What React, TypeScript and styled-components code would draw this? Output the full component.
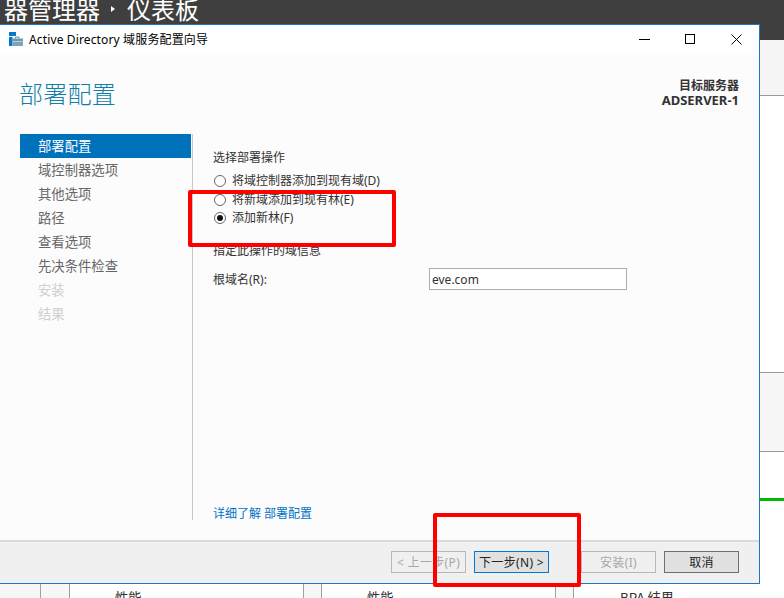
import React from "react";
import styled, { createGlobalStyle } from "styled-components";

const Global = createGlobalStyle`
  html, body { margin: 0; padding: 0; background: #fff; }
  body { font-family: "Noto Sans", "Noto Sans CJK SC", sans-serif; }
  * { box-sizing: border-box; }
`;

const Desktop = styled.div`
  position: relative;
  width: 784px;
  height: 598px;
  overflow: hidden;
`;

/* Server Manager behind the dialog */
const Backdrop = styled.div`
  display: flex;
  flex-direction: column;
  height: 100%;
`;
const TopBar = styled.div`
  height: 40px;
  background: #3f3f3f;
  color: #fff;
  display: flex;
  align-items: flex-start;
  font-size: 24px;
  line-height: 24px;
  font-family: "Noto Sans CJK SC", sans-serif;
  white-space: nowrap;
`;
const Crumbs = styled.div`
  display: flex;
  align-items: center;
  margin-left: 4px;
  margin-top: -3px;
  height: 24px;
`;
const CrumbArrow = styled.span`
  width: 0;
  height: 0;
  margin: 0 12px 0 11px;
  border-left: 4px solid #fff;
  border-top: 3.5px solid transparent;
  border-bottom: 3.5px solid transparent;
`;
const Band = styled.div<{ $h: number; $bg: string }>`
  height: ${(p) => p.$h}px;
  flex: none;
  background: ${(p) => p.$bg};
`;
const BottomRow = styled.div`
  flex: none;
  height: 14px;
  display: grid;
  grid-template-columns: 41px 29px 234px 18px 234px 18px 1fr;
  background: #fff;
  font-family: "Noto Sans CJK SC", sans-serif;
  font-size: 13.33px;
  color: #333;
  overflow: hidden;
`;
const ColCell = styled.div<{ $shade?: boolean; $textLeft?: number }>`
  background: ${(p) => (p.$shade ? "#f7f7f7" : "#fff")};
  border-right: 1px solid #a0a0a0;
  padding-left: ${(p) => p.$textLeft ?? 0}px;
  padding-top: 4px;
  line-height: 20px;
  white-space: nowrap;
`;
const LastCell = styled(ColCell)`
  border-right: none;
`;

/* Dialog */
const Window = styled.div`
  position: absolute;
  left: 0;
  top: 24px;
  width: 760px;
  height: 560px;
  display: flex;
  flex-direction: column;
  background: #fcfcfc;
  border: 1px solid #1a78c8;
  border-left: none;
`;
const TitleBar = styled.div`
  flex: none;
  height: 30px;
  background: #fff;
  display: flex;
  align-items: center;
  padding: 0 0 2px 9px;
  font-size: 12px;
  color: #000;
`;
const TitleText = styled.span`
  margin-left: 6px;
  flex: 1;
  white-space: nowrap;
  letter-spacing: 0.14px;
`;
const WinButton = styled.span`
  width: 46px;
  display: flex;
  justify-content: center;
  align-items: center;
`;
const Body = styled.div`
  flex: 1;
  display: flex;
  flex-direction: column;
  padding: 0 20px 20px;
  min-height: 0;
`;
const Header = styled.div`
  flex: none;
  height: 79px;
  display: flex;
  justify-content: space-between;
`;
const Heading = styled.h1`
  margin: 20px 0 0 -1px;
  font-size: 24px;
  line-height: 36px;
  font-weight: 300;
  letter-spacing: 0.25px;
  color: #117fa8;
  font-family: "Noto Sans CJK SC", sans-serif;
`;
const Target = styled.div`
  margin-top: 23px;
  text-align: right;
  font-size: 12px;
  line-height: 15px;
  font-weight: 600;
  color: #333;
`;
const TargetName = styled.div`
  font-weight: 700;
  font-size: 13px;
`;
const Main = styled.div`
  flex: 1;
  display: flex;
  min-height: 0;
`;
const Sidebar = styled.nav`
  flex: none;
  width: 173px;
  padding-right: 1px;
  border-right: 1px solid #c8c8c8;
  font-size: 13.33px;
  font-family: "Noto Sans CJK SC", sans-serif;
`;
const NavItem = styled.div<{ $state: "active" | "normal" | "disabled" }>`
  height: 24px;
  line-height: 24px;
  padding-left: 18px;
  background: ${(p) => (p.$state === "active" ? "#0072bc" : "transparent")};
  color: ${(p) =>
    p.$state === "active" ? "#fff" : p.$state === "disabled" ? "#cfcfcf" : "#666"};
`;
const Content = styled.div`
  flex: 1;
  display: flex;
  flex-direction: column;
  padding: 16px 0 0 20px;
  font-size: 12px;
  line-height: 16px;
  color: #333;
`;
const RadioGroup = styled.div`
  display: flex;
  flex-direction: column;
  gap: 2.6px;
  margin-top: 7px;
`;
const RadioRow = styled.label`
  display: flex;
  align-items: center;
  gap: 6px;
  height: 16px;
  padding-left: 1px;
`;
const RadioMark = styled.span<{ $checked?: boolean }>`
  flex: none;
  width: 12px;
  height: 12px;
  border-radius: 50%;
  border: 1px solid #666;
  background: #fff;
  display: flex;
  align-items: center;
  justify-content: center;
  &::after {
    content: "";
    width: 6px;
    height: 6px;
    border-radius: 50%;
    background: ${(p) => (p.$checked ? "#111" : "transparent")};
  }
`;
const SectionLabel = styled.div`
  margin-top: 17px;
`;
const FormRow = styled.div`
  display: flex;
  align-items: flex-start;
  margin-top: 9px;
`;
const FormLabel = styled.span`
  width: 216px;
  line-height: 24px;
`;
const TextBox = styled.div`
  width: 198px;
  height: 22px;
  border: 1px solid #abadb3;
  background: #fff;
  padding-left: 2px;
  line-height: 21px;
  color: #333;
`;
const HelpLink = styled.a`
  margin-top: auto;
  margin-bottom: -2px;
  color: #0072c6;
`;
const Footer = styled.div`
  flex: none;
  height: 43px;
  background: #f0f0f0;
  border-top: 2px solid #d9d9d9;
  display: flex;
  align-items: flex-start;
  justify-content: flex-end;
  padding: 9px 20px 0 0;
  gap: 8px;
  font-size: 12px;
`;
const Btn = styled.div<{ $kind?: "disabled" | "focus" | "normal"; $gapLeft?: number }>`
  width: 75px;
  height: 22px;
  line-height: 21px;
  text-align: center;
  white-space: nowrap;
  letter-spacing: 0.35px;
  margin-left: ${(p) => p.$gapLeft ?? 0}px;
  border: 1px solid
    ${(p) =>
      p.$kind === "disabled" ? "#b8b8b8" : p.$kind === "focus" ? "#0078d7" : "#707070"};
  background: ${(p) => (p.$kind === "disabled" ? "#f0f0f0" : "#e1e1e1")};
  color: ${(p) => (p.$kind === "disabled" ? "#a8a8a8" : "#222")};
`;
const RedBox = styled.div<{ $x: number; $y: number; $w: number; $h: number }>`
  position: absolute;
  left: ${(p) => p.$x}px;
  top: ${(p) => p.$y}px;
  width: ${(p) => p.$w}px;
  height: ${(p) => p.$h}px;
  border: 4px solid #ff0000;
  border-radius: 2px;
`;

const AppIcon = () => (
  <svg width="14" height="14" viewBox="0 0 14 14">
    <rect x="0" y="0" width="7" height="4" fill="#0a78c8" />
    <rect x="0" y="5" width="3.5" height="9" fill="#0a78c8" />
    <path d="M6.5 6.5V5h3.5v1.5" fill="none" stroke="#6f8da3" strokeWidth="1" />
    <rect x="3.5" y="6.5" width="10.5" height="3" fill="#6f96b2" />
    <rect x="3.5" y="10" width="10.5" height="4" fill="#7fa3bd" />
  </svg>
);

export default function App() {
  const nav: [string, "active" | "normal" | "disabled"][] = [
    ["部署配置", "active"],
    ["域控制器选项", "normal"],
    ["其他选项", "normal"],
    ["路径", "normal"],
    ["查看选项", "normal"],
    ["先决条件检查", "normal"],
    ["安装", "disabled"],
    ["结果", "disabled"],
  ];
  return (
    <Desktop>
      <Global />
      <Backdrop>
        <TopBar>
          <Crumbs>
            <span>器管理器</span>
            <CrumbArrow />
            <span>仪表板</span>
          </Crumbs>
        </TopBar>
        <Band $h={55} $bg="#f5f5f5" />
        <Band $h={1} $bg="#9a9a9a" />
        <Band $h={276} $bg="#fff" />
        <Band $h={1} $bg="#9a9a9a" />
        <Band $h={78} $bg="#f7f7f7" />
        <Band $h={1} $bg="#9a9a9a" />
        <Band $h={46} $bg="#fff" />
        <Band $h={3} $bg="#00b900" />
        <Band $h={83} $bg="#fff" />
        <BottomRow>
          <ColCell $shade />
          <ColCell $shade />
          <ColCell $textLeft={45}>性能</ColCell>
          <ColCell $shade />
          <ColCell $textLeft={45}>性能</ColCell>
          <ColCell $shade />
          <LastCell $textLeft={46}>BPA 结果</LastCell>
        </BottomRow>
      </Backdrop>

      <Window>
        <TitleBar>
          <AppIcon />
          <TitleText>Active Directory 域服务配置向导</TitleText>
          <WinButton>
            <svg width="11" height="11" viewBox="0 0 11 11">
              <path d="M0 5.5h11" stroke="#000" strokeWidth="1" />
            </svg>
          </WinButton>
          <WinButton>
            <svg width="11" height="11" viewBox="0 0 11 11">
              <rect x="0.5" y="0.5" width="9" height="9" fill="none" stroke="#000" />
            </svg>
          </WinButton>
          <WinButton>
            <svg width="11" height="11" viewBox="0 0 11 11">
              <path d="M0.5 0.5l10 10M10.5 0.5l-10 10" stroke="#000" strokeWidth="1" />
            </svg>
          </WinButton>
        </TitleBar>
        <Body>
          <Header>
            <Heading>部署配置</Heading>
            <Target>
              目标服务器
              <TargetName>ADSERVER-1</TargetName>
            </Target>
          </Header>
          <Main>
            <Sidebar>
              {nav.map(([label, state]) => (
                <NavItem key={label} $state={state}>
                  {label}
                </NavItem>
              ))}
            </Sidebar>
            <Content>
              <div>选择部署操作</div>
              <RadioGroup>
                <RadioRow>
                  <RadioMark />
                  将域控制器添加到现有域(D)
                </RadioRow>
                <RadioRow>
                  <RadioMark />
                  将新域添加到现有林(E)
                </RadioRow>
                <RadioRow>
                  <RadioMark $checked />
                  添加新林(F)
                </RadioRow>
              </RadioGroup>
              <SectionLabel>指定此操作的域信息</SectionLabel>
              <FormRow>
                <FormLabel>根域名(R):</FormLabel>
                <TextBox>eve.com</TextBox>
              </FormRow>
              <HelpLink>详细了解 部署配置</HelpLink>
            </Content>
          </Main>
        </Body>
        <Footer>
          <Btn $kind="disabled">&lt; 上一步(P)</Btn>
          <Btn $kind="focus">下一步(N) &gt;</Btn>
          <Btn $kind="disabled" $gapLeft={24}>
            安装(I)
          </Btn>
          <Btn>取消</Btn>
        </Footer>
      </Window>

      <RedBox $x={188} $y={190} $w={208} $h={57} />
      <RedBox $x={433} $y={513} $w={148} $h={74} />
    </Desktop>
  );
}
